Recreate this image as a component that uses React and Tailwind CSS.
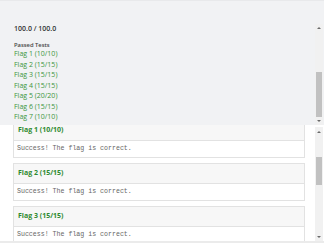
const flags = [
  { name: 'Flag 1', score: '10/10' },
  { name: 'Flag 2', score: '15/15' },
  { name: 'Flag 3', score: '15/15' },
  { name: 'Flag 4', score: '15/15' },
  { name: 'Flag 5', score: '20/20' },
  { name: 'Flag 6', score: '15/15' },
  { name: 'Flag 7', score: '10/10' },
];

function ArrowUp() {
  return (
    <div className="w-0 h-0 border-l-[2px] border-r-[2px] border-b-[2px] border-l-transparent border-r-transparent border-b-[#6b6b6b]" />
  );
}

function ArrowDown() {
  return (
    <div className="w-0 h-0 border-l-[2px] border-r-[2px] border-t-[2px] border-l-transparent border-r-transparent border-t-[#6b6b6b]" />
  );
}

function ResultCard({ flag }) {
  return (
    <div className="border border-[#e2e2e2] mb-[5px]">
      <div className="h-[20px] bg-[#f7f7f7] border-b border-[#e2e2e2] flex items-center px-[4px] text-[7px] font-bold text-[#2f8a2f]">
        {flag.name} ({flag.score})
      </div>
      <div className="h-[16px] bg-white flex items-center px-[3px] text-[6.6px] text-[#666] font-['Liberation_Mono',monospace]">
        Success! The flag is correct.
      </div>
    </div>
  );
}

export default function App() {
  return (
    <div className="w-[324px] h-[243px] overflow-hidden bg-white font-['Open_Sans',sans-serif]">
      {/* summary panel */}
      <div className="h-[125px] bg-[#f1f2f4] border-t border-[#e8e9eb] flex">
        <div className="flex-1 pl-[14px] pt-[23px]">
          <div className="h-[10px] leading-[10px] text-[7px] font-semibold text-[#333]">100.0 / 100.0</div>
          <div className="mt-[7px] h-[8px] leading-[8px] text-[5.8px] font-semibold text-[#444]">Passed Tests</div>
          <ul>
            {flags.map((f) => (
              <li key={f.name} className="h-[10.5px] leading-[10.5px] text-[7px] text-[#3b963b]">
                {f.name} ({f.score})
              </li>
            ))}
          </ul>
        </div>
        <div className="w-[8px] mr-[1px] mt-[23px] bg-[#f1f1f1] flex flex-col">
          <div className="h-[8px] flex items-center justify-center"><ArrowUp /></div>
          <div className="flex-1 flex flex-col">
            <div className="mt-auto h-[45px] mx-[1px] bg-[#c1c1c1]" />
          </div>
          <div className="h-[8px] flex items-center justify-center"><ArrowDown /></div>
        </div>
      </div>

      {/* results panel */}
      <div className="h-[116px] flex bg-white">
        <div className="flex-1 overflow-hidden pl-[13px] pr-[10px]">
          <div className="-mt-[5px]">
            {flags.slice(0, 3).map((f) => (
              <ResultCard key={f.name} flag={f} />
            ))}
          </div>
        </div>
        <div className="w-[8px] mr-[1px] mt-[2px] bg-[#f1f1f1] flex flex-col">
          <div className="h-[9px] flex items-center justify-center"><ArrowUp /></div>
          <div className="flex-1">
            <div className="mt-[21px] h-[28px] mx-[1px] bg-[#c1c1c1]" />
          </div>
          <div className="h-[8px] flex items-center justify-center"><ArrowDown /></div>
        </div>
      </div>
      <div className="h-[2px] bg-[#ebebeb]" />
    </div>
  );
}
